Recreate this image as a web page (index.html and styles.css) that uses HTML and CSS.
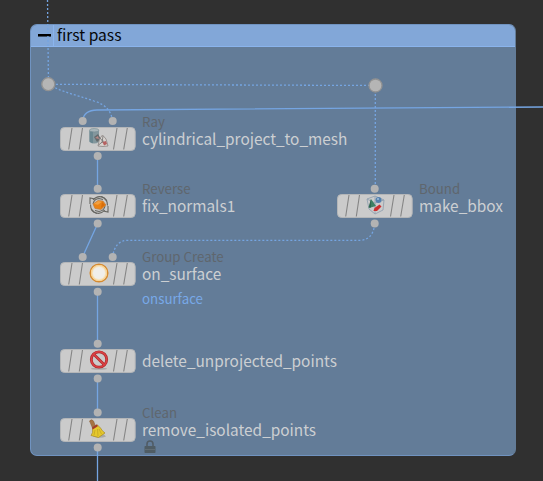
FILE: index.html
```
<!DOCTYPE html>
<html lang="en">
<head>
  <meta charset="UTF-8">
  <meta name="viewport" content="width=device-width, initial-scale=1.0">
  <title>first pass</title>
  <link rel="stylesheet" href="styles.css">
</head>
<body>
  <!-- shared shapes -->
  <svg class="defs" width="0" height="0">
    <symbol id="plate" viewBox="0 0 76 24">
      <rect x=".5" y=".5" width="74.700" height="23" rx="4" fill="#cbcbcb" stroke="#b4b6b8"/>
      <path d="M12 1L8.7 22.5M22.5 1L19.3 22.5M57 1L53.5 22.5M67.3 1L63.7 22.5" stroke="#858585" stroke-width="1.1"/>
    </symbol>
    <symbol id="ray" viewBox="0 0 20 20">
      <path d="M.5 2v12q4.500 3 9.500 0V2z" fill="#83979d"/>
      <path d="M.5 3v10.500q2 1.500 3.500 1.700V3z" fill="#6a8790"/>
      <ellipse cx="5.200" cy="2.200" rx="4.700" ry="1.700" fill="#a8b6ba" stroke="#768b92" stroke-width=".6"/>
      <path d="M5 9l4-3 3 5-4 3z" fill="#646a6c"/>
      <path d="M6 10l3-2 1 3z" fill="#b88885"/>
      <path d="M9 18l1.500-7L13.500 7l3.500 4 2 7-5 .5z" fill="#d8d3cf" stroke="#8c8583" stroke-width=".8"/>
      <path d="M11 10l5 6M14 8l-1 7M9.500 17l5-4" stroke="#777" stroke-width=".9"/>
      <path d="M13.500 14l3.500-1 1 3-3 1.500z" fill="#b56161"/>
    </symbol>
    <symbol id="reverse" viewBox="0 0 20 20">
      <g fill="none" stroke="#666661" stroke-width="1.1">
        <path d="M8 18.500Q1.500 17 1.500 9.500M1 9V3l5 1M4 5Q9-.5 15 3l3 3M4 9Q5 4 10 3.500l4 1"/>
        <path d="M12 1.500Q18.500 3 18.500 10.500M19 11v6l-5-1M16 15Q11 20.500 5 17l-3-3M16 11Q15 16 10 16.500l-4-1"/>
      </g>
      <path d="M4 9l5-3.500 5 .5 3 4-5 4.500-6-1z" fill="#e98215" stroke="#b9793b" stroke-width=".6"/>
      <path d="M5 9l4-3 4 .7-4 3z" fill="#f3a040"/>
      <path d="M13 7l3 3-4 3z" fill="#d86d0a"/>
    </symbol>
    <symbol id="group" viewBox="0 0 20 20">
      <circle cx="10" cy="10" r="8.800" fill="#f5e6c6" stroke="#d58b32" stroke-width="1.500"/>
      <circle cx="10" cy="10" r="7.500" fill="none" stroke="#f8d394" stroke-width="1.200"/>
      <circle cx="10" cy="10" r="6" fill="#f0eeea"/>
    </symbol>
    <symbol id="forbid" viewBox="0 0 20 20">
      <ellipse cx="10" cy="18.800" rx="8" ry="1" fill="#aaa"/>
      <circle cx="10" cy="9.500" r="7.700" fill="none" stroke="#aa292b" stroke-width="2.800"/>
      <path d="M4.700 4.200l10.600 10.600" stroke="#aa292b" stroke-width="2.800"/>
      <circle cx="10" cy="9.500" r="7.700" fill="none" stroke="#dc4144" stroke-width="1.500"/>
      <path d="M4.700 4.200l10.600 10.600" stroke="#dc4144" stroke-width="1.500"/>
    </symbol>
    <symbol id="broom" viewBox="0 0 20 20">
      <path d="M4 17.500q7 2.500 13 0l-2-2H5z" fill="#a9a9a5"/>
      <path d="M.5 2q2-2.500 4 0L6.500 7l-3 2z" fill="#a67343" stroke="#875b35" stroke-width=".5"/>
      <path d="M3.500 9l5-3 3 3q1.500 3 4.500 5L9.500 18.500 2 16.500q2.500-2.500 1.500-7.500z" fill="#e5c82c" stroke="#a88b20" stroke-width=".7"/>
      <path d="M6 11l-1 5M8.500 10l.5 7M10 10l2.500 5" stroke="#b89c20" stroke-width=".6"/>
      <path d="M3 8.500L8 5.300l.8 1.900L3.700 10.500z" fill="#a33c2b"/>
    </symbol>
    <symbol id="bound" viewBox="0 0 20 20">
      <path d="M1 4l8-3 9 4-1 10-8 4-6-5zM1 4l8 4 9-3M9 8v11M9 1v7" fill="none" stroke="#93a2b0" stroke-width=".9"/>
      <path d="M5 4l5 7-7 2z" fill="#3d8063"/>
      <path d="M5 4v8.500l-2.500 0z" fill="#2f6750"/>
      <circle cx="12.500" cy="5" r="3" fill="#5581ae"/>
      <circle cx="12" cy="4" r="1.100" fill="#9bbbd8"/>
      <path d="M8.500 13l5-3.500 2 2L11 16l-3.500 0z" fill="#cc2e2e"/>
    </symbol>
  </svg>

  <main class="network">
    <section class="box">
      <header class="box-head">
        <span class="toggle"><i class="minus"></i></span>
        <h1>first pass</h1>
      </header>
    </section>

    <svg class="wires" width="543" height="481" viewBox="0 0 543 481">
      <g class="dotted">
        <path d="M47.500 0L48.500 84"/>
        <path d="M48 84.300L375 85.500"/>
        <path d="M48 84C64 93 77 95 94 101Q111 106 112.500 121"/>
        <path d="M375.300 86V189"/>
        <path d="M374.700 224Q373 240 360 240.300H128Q115 240.300 112.500 257"/>
      </g>
      <g class="solid">
        <path d="M82.500 121Q84 110 97 110L543 107"/>
        <path d="M97.500 156V189"/>
        <path d="M97.500 224L82.500 257"/>
        <path d="M97.500 292V344"/>
        <path d="M97.500 379V412"/>
        <path d="M97.500 447V481"/>
      </g>
      <g class="knots">
        <circle cx="48.300" cy="84.200" r="6.500"/>
        <circle cx="375.500" cy="85.500" r="6.500"/>
      </g>
      <g class="ports">
        <circle cx="82.700" cy="121" r="4"/>
        <circle cx="112.700" cy="121" r="4"/>
        <circle cx="97.700" cy="156" r="4"/>
        <circle cx="97.700" cy="188.700" r="4"/>
        <circle cx="97.700" cy="223.600" r="4"/>
        <circle cx="374.700" cy="188.700" r="4"/>
        <circle cx="374.700" cy="223.600" r="4"/>
        <circle cx="82.700" cy="257" r="4"/>
        <circle cx="112.700" cy="257" r="4"/>
        <circle cx="97.700" cy="291.700" r="4"/>
        <circle cx="97.700" cy="343.700" r="4"/>
        <circle cx="97.700" cy="378.600" r="4"/>
        <circle cx="97.700" cy="412.500" r="4"/>
        <circle cx="97.700" cy="447.500" r="4"/>
      </g>
    </svg>

    <article class="node node-ray">
      <div class="body"><svg class="plate"><use href="#plate"/></svg><svg class="icon"><use href="#ray"/></svg></div>
      <div class="labels">
        <span class="type">Ray</span>
        <span class="name">cylindrical_project_to_mesh</span>
      </div>
    </article>

    <article class="node node-reverse">
      <div class="body"><svg class="plate"><use href="#plate"/></svg><svg class="icon"><use href="#reverse"/></svg></div>
      <div class="labels">
        <span class="type">Reverse</span>
        <span class="name">fix_normals1</span>
      </div>
    </article>

    <article class="node node-bound">
      <div class="body"><svg class="plate"><use href="#plate"/></svg><svg class="icon"><use href="#bound"/></svg></div>
      <div class="labels">
        <span class="type">Bound</span>
        <span class="name">make_bbox</span>
      </div>
    </article>

    <article class="node node-group">
      <div class="body"><svg class="plate"><use href="#plate"/></svg><svg class="icon"><use href="#group"/></svg></div>
      <div class="labels">
        <span class="type">Group Create</span>
        <span class="name">on_surface</span>
        <span class="output">onsurface</span>
      </div>
    </article>

    <article class="node node-delete">
      <div class="body"><svg class="plate"><use href="#plate"/></svg><svg class="icon"><use href="#forbid"/></svg></div>
      <div class="labels">
        <span class="type"></span>
        <span class="name">delete_unprojected_points</span>
      </div>
    </article>

    <article class="node node-clean">
      <div class="body"><svg class="plate"><use href="#plate"/></svg><svg class="icon"><use href="#broom"/></svg></div>
      <div class="labels">
        <span class="type">Clean</span>
        <span class="name">remove_isolated_points</span>
        <svg class="lock" viewBox="0 0 12 14">
          <path d="M3 7V4q0-3 3-3t3 3v3" fill="none" stroke="#505c66" stroke-width="1.600"/>
          <rect x=".5" y="6" width="11" height="7" rx=".8" fill="#4f5c64"/>
          <path d="M1 9.500h10" stroke="#657078" stroke-width=".8"/>
        </svg>
      </div>
    </article>
  </main>
</body>
</html>
```
FILE: styles.css
```
:root {
  --clr-bg: #303030;
  --clr-box: #637c98;
  --clr-head: #82a7d8;
  --clr-line: #8ab4ed;
  --clr-wire: #75a5e2;
  --clr-port: #b3b3b3;
}

* {
  padding: 0;
  margin: 0;
  box-sizing: border-box;
}

body {
  background-color: var(--clr-bg);
  font-family: "Noto Sans CJK SC", "Noto Sans", sans-serif;
  line-height: 1;
  overflow: hidden;
}

.defs {
  position: absolute;
}

.network {
  position: relative;
  width: 543px;
  height: 481px;
  padding: 24px 27px 25px 30px;
  overflow: hidden;
}

.box {
  height: 432px;
  background-color: var(--clr-box);
  border: 1px solid #7093c0;
  border-right-color: var(--clr-box);
  border-radius: 7px;
  overflow: hidden;
}

.box-head {
  display: flex;
  height: 22px;
  background-color: var(--clr-head);
  border-bottom: 1px solid var(--clr-line);
}

.toggle {
  width: 23px;
  height: 100%;
  padding: 9px 0 0 7px;
  border-right: 1px solid var(--clr-line);
}

.minus {
  display: block;
  width: 13px;
  height: 2px;
  background-color: #000;
  box-shadow: 0 1px 0 #3c4c60;
}

h1 {
  margin-left: 3px;
  font-size: 15.6px;
  font-weight: 400;
  line-height: 18px;
  color: #06080a;
  white-space: nowrap;
}

.wires {
  position: absolute;
  top: 0;
  left: 0;
}

.dotted, .solid {
  fill: none;
  stroke: var(--clr-wire);
}

.dotted {
  stroke-width: 1.3;
  stroke-dasharray: 2 2;
}

.solid {
  stroke-width: 1.3;
}

.knots {
  fill: #b5b5b5;
  stroke: #929292;
  stroke-width: 1.3;
}

.ports {
  fill: var(--clr-port);
}

/* nodes sit freely on the network canvas */
.node {
  position: absolute;
  display: flex;
  gap: 6px;
}

.node-ray { left: 60px; top: 115px; }
.node-reverse { left: 60px; top: 182px; }
.node-bound { left: 337px; top: 182px; }
.node-group { left: 60px; top: 250px; }
.node-delete { left: 60px; top: 337px; }
.node-clean { left: 60px; top: 406px; }

.body {
  display: grid;
  place-items: center;
  width: 76px;
  height: 24px;
  margin-top: 12px;
}

.body svg {
  grid-area: 1 / 1;
}

.plate {
  width: 76px;
  height: 24px;
}

.icon {
  width: 20px;
  height: 20px;
  margin: 0 0 2px 1px;
}

.labels {
  display: flex;
  flex-direction: column;
  align-items: flex-start;
  margin-top: -1px;
  white-space: nowrap;
}

.type {
  height: 14px;
  font-size: 13.3px;
  line-height: 16px;
  color: #5f666d;
}

.name {
  font-size: 15.4px;
  line-height: 20px;
  color: #cccfd2;
}

.output {
  margin-top: 8px;
  font-size: 13.3px;
  line-height: 16px;
  color: #78a9e8;
}

.lock {
  width: 12px;
  height: 14px;
  margin: 1px 0 0 2px;
}
```
